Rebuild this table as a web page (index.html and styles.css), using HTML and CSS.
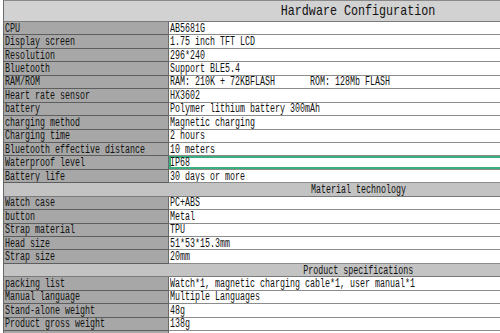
FILE: index.html
```html
<!DOCTYPE html>
<html>
<head>
<meta charset="utf-8">
<link rel="stylesheet" href="styles.css">
</head>
<body>
<div class="sheet">
  <div class="head"><span class="t tc">Hardware Configuration</span></div>

  <div class="k"><span class="t">CPU</span></div><div class="v"><span class="t">AB5681G</span></div>
  <div class="k"><span class="t">Display screen</span></div><div class="v"><span class="t">1.75 inch TFT LCD</span></div>
  <div class="k"><span class="t">Resolution</span></div><div class="v"><span class="t">296*240</span></div>
  <div class="k"><span class="t">Bluetooth</span></div><div class="v"><span class="t">Support BLE5.4</span></div>
  <div class="k"><span class="t">RAM/ROM</span></div><div class="v"><span class="t">RAM: 210K + 72KBFLASH       ROM: 128Mb FLASH</span></div>
  <div class="k"><span class="t">Heart rate sensor</span></div><div class="v"><span class="t">HX3602</span></div>
  <div class="k"><span class="t">battery</span></div><div class="v"><span class="t">Polymer lithium battery 300mAh</span></div>
  <div class="k"><span class="t">charging method</span></div><div class="v"><span class="t">Magnetic charging</span></div>
  <div class="k"><span class="t">Charging time</span></div><div class="v"><span class="t">2 hours</span></div>
  <div class="k"><span class="t">Bluetooth effective distance</span></div><div class="v"><span class="t">10 meters</span></div>
  <div class="k"><span class="t">Waterproof level</span></div><div class="v sel"><span class="t">IP68</span></div>
  <div class="k"><span class="t">Battery life</span></div><div class="v"><span class="t">30 days or more</span></div>

  <div class="sec"><span class="t tc">Material technology</span></div>

  <div class="k"><span class="t">Watch case</span></div><div class="v"><span class="t">PC+ABS</span></div>
  <div class="k"><span class="t">button</span></div><div class="v"><span class="t">Metal</span></div>
  <div class="k"><span class="t">Strap material</span></div><div class="v"><span class="t">TPU</span></div>
  <div class="k"><span class="t">Head size</span></div><div class="v"><span class="t">51*53*15.3mm</span></div>
  <div class="k"><span class="t">Strap size</span></div><div class="v"><span class="t">20mm</span></div>

  <div class="sec"><span class="t tc">Product specifications</span></div>

  <div class="k"><span class="t">packing list</span></div><div class="v"><span class="t">Watch*1, magnetic charging cable*1, user manual*1</span></div>
  <div class="k"><span class="t">Manual language</span></div><div class="v"><span class="t">Multiple Languages</span></div>
  <div class="k"><span class="t">Stand-alone weight</span></div><div class="v"><span class="t">48g</span></div>
  <div class="k"><span class="t">Product gross weight</span></div><div class="v"><span class="t">138g</span></div>
  <div class="k"><span class="t"></span></div><div class="v"><span class="t"></span></div>
</div>
</body>
</html>
```

FILE: styles.css
```css
html, body {
  margin: 0;
  padding: 0;
  background: #ffffff;
  overflow: hidden;
  width: 500px;
  height: 333px;
}

.sheet {
  margin-left: 3px;
  width: 497px;
  display: grid;
  grid-template-columns: 165px 332px;
  grid-template-rows: 21px;
  grid-auto-rows: 13.44px;
  border-left: 1px solid #6a6a6a;
  border-top: 1px solid #8a8a8a;
  box-sizing: border-box;
  font-family: "Liberation Mono", "DejaVu Sans Mono", monospace;
  font-size: 12px;
  color: #111111;
  overflow: hidden;
}

.sheet > div {
  box-sizing: border-box;
  border-bottom: 1px solid #7a7a7a;
  display: flex;
  align-items: center;
  overflow: hidden;
  white-space: pre;
  line-height: 12px;
}

.t {
  display: inline-block;
  transform: scaleX(0.694);
  transform-origin: 0 50%;
  padding-top: 1px;
}

.tc {
  transform-origin: 50% 50%;
}

/* spanning rows: table continues past the right edge, so titles are
   centred on the full sheet width (centre at x=358) */
.head {
  grid-column: 1 / 3;
  background: #d2d2d2;
  justify-content: center;
  padding-left: 212px;
  font-size: 15px;
  border-bottom: 1px solid #7e7e7e;
}

.head .t {
  transform: scaleX(0.78);
}

.sec {
  grid-column: 1 / 3;
  background: #c3c3c3;
  justify-content: center;
  padding-left: 212px;
}

.k {
  background: #a7a7a7;
  border-right: 1px solid #6a6a6a;
  padding-left: 1px;
  border-bottom-color: #5e5e5e !important;
}

.v {
  background: #ffffff;
  padding-left: 1px;
  border-bottom-color: #8c8c8c !important;
}

/* selected cell: continues past the right edge, so no right side */
.sel {
  box-shadow: inset 2px 0 0 #3aae7e, inset 0 2px 0 #3aae7e, inset 0 -2px 0 #3aae7e;
}
```
